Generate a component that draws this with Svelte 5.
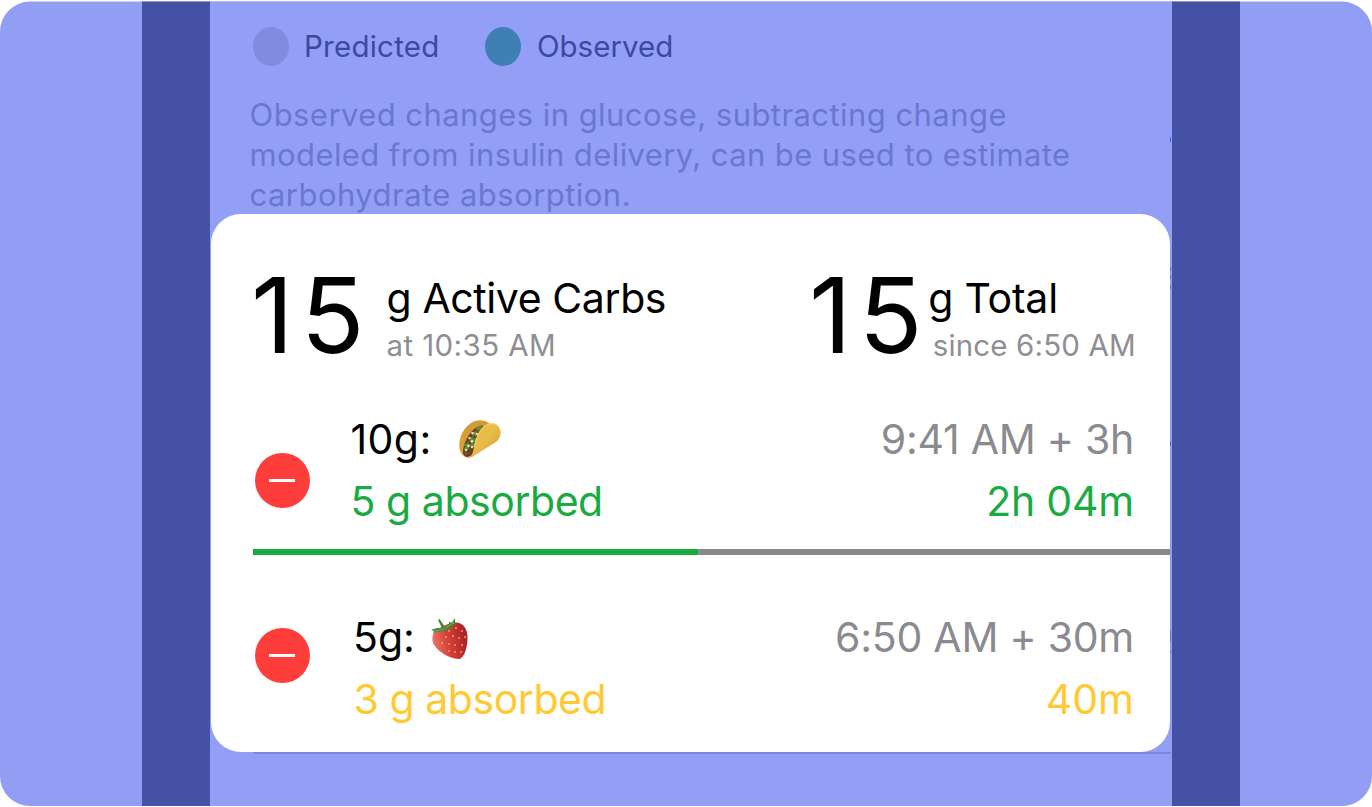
<script>
  const legend = [
    { label: 'Predicted', kind: 'predicted' },
    { label: 'Observed', kind: 'observed' }
  ];
  const note = [
    { text: 'Observed changes in glucose, subtracting change', spacing: 0.44 },
    { text: 'modeled from insulin delivery, can be used to estimate', spacing: 0.41 },
    { text: 'carbohydrate absorption.', spacing: 0.46 }
  ];
  const entries = [
    { id: 'taco', carbs: '10g:', absorbed: '5 g absorbed', time: '9:41 AM + 3h', left: '2h 04m' },
    { id: 'berry', carbs: '5g:', absorbed: '3 g absorbed', time: '6:50 AM + 30m', left: '40m' }
  ];
  const marks = [
    { top: 137, height: 5, tone: 'strong' },
    { top: 267, height: 4, tone: 'soft' },
    { top: 275, height: 4, tone: 'soft' },
    { top: 285, height: 4, tone: 'soft' },
    { top: 441, height: 5, tone: 'strong' },
    { top: 630, height: 12, tone: 'soft' },
    { top: 650, height: 3, tone: 'soft' }
  ];
  const seeds = [
    [18, 14], [25, 11], [31, 14], [15, 20], [22, 19], [28, 21], [34, 20],
    [11, 26], [18, 27], [24, 28], [31, 28], [18, 34], [24, 35], [30, 35]
  ];
</script>

<div class="stage">
  <div class="phone">
    <div class="screen">
      <div class="legend">
        {#each legend as item}
          <div class="key {item.kind}"><i></i><span>{item.label}</span></div>
        {/each}
      </div>
      <p class="note">
        {#each note as line}
          <span style="letter-spacing: {line.spacing}px">{line.text}</span>
        {/each}
      </p>

      <section class="card">
        <header>
          <div class="total active">
            <strong>15</strong>
            <div class="caption">
              <b>g Active Carbs</b>
              <small>at 10:35 AM</small>
            </div>
          </div>
          <div class="total day">
            <strong>15</strong>
            <div class="caption">
              <b>g Total</b>
              <small>since 6:50 AM</small>
            </div>
          </div>
        </header>

        {#each entries as entry}
          <div class="entry {entry.id}">
            <div class="remove"><i></i></div>
            <div class="info">
              <div class="food">
                <span class="carbs">{entry.carbs}</span>
                {#if entry.id === 'taco'}
                  <svg class="tacoIcon" width="44" height="40" viewBox="0 0 44 40">
                    <defs>
                      <linearGradient id="shell" x1="0" y1="0" x2="1" y2="1">
                        <stop offset="0" stop-color="#f0bd42" />
                        <stop offset=".5" stop-color="#e8bc48" />
                        <stop offset="1" stop-color="#d39b2c" />
                      </linearGradient>
                      <linearGradient id="back" x1="0" y1="0" x2="0" y2="1">
                        <stop offset="0" stop-color="#cf9a35" />
                        <stop offset="1" stop-color="#e5a33a" />
                      </linearGradient>
                    </defs>
                    <path d="M9 38.500C3 37 1 31 1.300 25C1.700 15 9 4 18 1.800C23 .5 28 1.500 31 4.500L17 36C14 38.500 11 39 9 38.500Z" fill="url(#back)" />
                    <path d="M5 34C4.500 28 8 19 14 12C18 8 22 6 25 7L18 35L9 38C6.500 37.500 5.500 36 5 34Z" fill="#654022" />
                    <g fill="#599438">
                      <path d="M18 9l5-3 1 4-5 3zM13 14l5-2 2 4-5 2zM11 19l4-1 1 4-4 1zM16 19l4 1-2 4-3-1zM6 25l5-1-1 4-4-1zM12 25l5-1 0 4-4 1zM6 29l3-2 2 3-4 2z" />
                    </g>
                    <g fill="#e2d8c9">
                      <circle cx="14.500" cy="14" r="1.300" /><circle cx="19" cy="15" r="1.300" />
                      <circle cx="11.500" cy="19" r="1.200" /><circle cx="14" cy="22.500" r="1.400" />
                      <circle cx="10.500" cy="27" r="1.400" /><circle cx="14" cy="28" r="1.200" />
                      <circle cx="8" cy="31" r="1.200" />
                    </g>
                    <g fill="#8e4e2c">
                      <circle cx="20" cy="12" r="1.500" /><circle cx="10" cy="23" r="1.300" />
                      <circle cx="8" cy="34.500" r="1.500" /><circle cx="16" cy="17" r="1.200" />
                    </g>
                    <path d="M9.500 38.300C14 38 15 34 16 28C17.500 20 20 12 26 7C32 2.500 39 4 41.500 9C44 14 42 20 38 23L17 36C14 38 11.500 39 9.500 38.300Z" fill="url(#shell)" />
                    <path d="M16.500 28C18 20 20.500 12.500 26.500 7.500C32 3.500 38 4.500 40.500 8" fill="none" stroke="#f8d269" stroke-width="1" />
                  </svg>
                {:else}
                  <svg class="berryIcon" width="38" height="43" viewBox="0 0 38 43">
                    <defs>
                      <linearGradient id="flesh" x1="0" y1=".6" x2="1" y2=".4">
                        <stop offset="0" stop-color="#eb7669" />
                        <stop offset=".45" stop-color="#d63f38" />
                        <stop offset="1" stop-color="#a91f29" />
                      </linearGradient>
                    </defs>
                    <path d="M2 18C1 21 1 24 3 28C8 35 17 41 28 42C32 42 36 34 36.500 22C37 12 32 6 26 5.500C17 5 5 12 2 18Z" fill="url(#flesh)" />
                    <g fill="#ecb14e">
                      {#each seeds as [x, y]}
                        <ellipse cx={x} cy={y} rx=".9" ry="1.100" />
                      {/each}
                    </g>
                    <path d="M7 3L8.500 2L14 10L18 7L18 5L21 5.500L24 1L24 6L26 7L22 8L20 12L17 11L15 15L12 13L9 15L6 14L2 17L3 14L0 13L6 11L11 11Z" fill="#3d8b36" />
                    <path d="M13 12L20 7L23 6M4 13.500L12 12.500" fill="none" stroke="#77b354" stroke-width="1" />
                  </svg>
                {/if}
              </div>
              <div class="absorbed">{entry.absorbed}</div>
            </div>
            <div class="timing">
              <div class="time">{entry.time}</div>
              <div class="left">{entry.left}</div>
            </div>
          </div>
          {#if entry.id === 'taco'}
            <div class="progress"><i></i></div>
          {/if}
        {/each}
      </section>
      <div class="rule"></div>
    </div>
  </div>
  {#each marks as mark}
    <i class="mark {mark.tone}" style="top: {mark.top}px; height: {mark.height}px"></i>
  {/each}
</div>

<style>
  :global(body) {
    margin: 0;
    background: #fff;
  }
  .stage {
    position: relative;
    box-sizing: border-box;
    width: 1372px;
    height: 807px;
    padding: 0 132px 0 142px;
    overflow: hidden;
    font-family: Inter, 'Noto Sans', sans-serif;
    white-space: nowrap;
    clip-path: inset(1.6px 0 0.9px 0 round 30px);
    background: #929ef4;
  }
  .phone {
    box-sizing: border-box;
    width: 1098px;
    height: 807px;
    border: solid #4551a5;
    border-width: 0 68.500px 0 68px;
  }
  .screen {
    display: flex;
    flex-direction: column;
    box-sizing: border-box;
    height: 807px;
    padding: 27px 0 0 0.5px;
    background: #939ff5;
  }
  .legend {
    display: flex;
    height: 39.500px;
    padding-left: 42.500px;
  }
  .key {
    display: flex;
    align-items: center;
    gap: 15px;
    width: 232px;
    font-size: 29.500px;
    line-height: 39px;
    color: #3d489f;
  }
  .key i {
    width: 36px;
    height: 39px;
    border-radius: 50%;
    background: #818ce0;
  }
  .predicted span { letter-spacing: 0.25px; }
  .observed span { letter-spacing: 0; }
  .observed { gap: 16px; }
  .observed i { background: #3e80b3; }
  .note {
    display: flex;
    flex-direction: column;
    height: 119.200px;
    margin: 28.300px 0 0;
    padding-left: 39px;
    font-size: 31px;
    line-height: 40px;
    color: #6b77cf;
  }
  .card {
    flex: none;
    box-sizing: border-box;
    width: 959.500px;
    height: 538.500px;
    border-radius: 30px;
    background: #fff;
    color: #000;
  }
  header {
    display: grid;
    grid-template-columns: 558px auto;
    box-sizing: border-box;
    height: 193.700px;
    padding: 48.500px 0 0 40.500px;
  }
  .total { display: flex; }
  .total strong {
    font-size: 105px;
    font-weight: 400;
    line-height: 105px;
    letter-spacing: 7px;
  }
  .active strong { width: 135.500px; }
  .day strong { width: 119.200px; }
  .caption {
    display: flex;
    flex-direction: column;
    gap: 6px;
    padding-top: 13px;
  }
  .caption b {
    font-size: 41px;
    font-weight: 400;
    line-height: 46px;
    letter-spacing: -0.4px;
  }
  .caption small {
    font-size: 29.500px;
    line-height: 36px;
    color: #8e8e93;
    letter-spacing: 0.4px;
  }
  .day b { letter-spacing: -0.2px; }
  .day small {
    padding-left: 4.500px;
    letter-spacing: 0.15px;
  }
  .entry {
    display: flex;
    height: 141.500px;
    padding: 0 36px 0 44px;
    font-size: 41px;
    line-height: 62.500px;
  }
  .remove {
    display: flex;
    align-items: center;
    justify-content: center;
    width: 55px;
    height: 55px;
    margin-top: 45.300px;
    border-radius: 50%;
    background: #ff3d3b;
  }
  .berry .remove { margin-top: 22.200px; }
  .remove i {
    width: 26px;
    height: 2.600px;
    background: #fff;
  }
  .info { margin-left: 41px; }
  .food {
    display: flex;
    align-items: center;
    height: 62.500px;
  }
  .taco .carbs { width: 107.500px; letter-spacing: 0.4px; }
  .taco .absorbed { letter-spacing: -0.45px; }
  .berry .info { margin-left: 43.500px; }
  .berry .carbs { width: 77.500px; letter-spacing: 0; }
  .berry .absorbed { letter-spacing: -0.45px; padding-left: 0.5px; }
  .berryIcon { margin-top: 4px; }
  .timing {
    margin-left: auto;
    text-align: right;
  }
  .time { color: #8a8a8f; letter-spacing: -0.25px; }
  .left { letter-spacing: -0.2px; }
  .taco .absorbed, .taco .left { color: #19ab41; }
  .berry .absorbed, .berry .left { color: #ffc933; }
  .berry .left { letter-spacing: 0; }
  .progress {
    height: 5.600px;
    margin: 0 0 50.900px 42.500px;
    background: #88898d;
  }
  .progress i {
    display: block;
    width: 445px;
    height: 100%;
    background: #19ab41;
  }
  .rule {
    height: 1.500px;
    margin: 0 1.500px 0 42.500px;
    background: #7c88da;
  }
  .mark {
    position: absolute;
    left: 1170px;
    width: 1px;
    background: #4b64ec;
  }
  .mark.soft { background: #6672c8; }
</style>
